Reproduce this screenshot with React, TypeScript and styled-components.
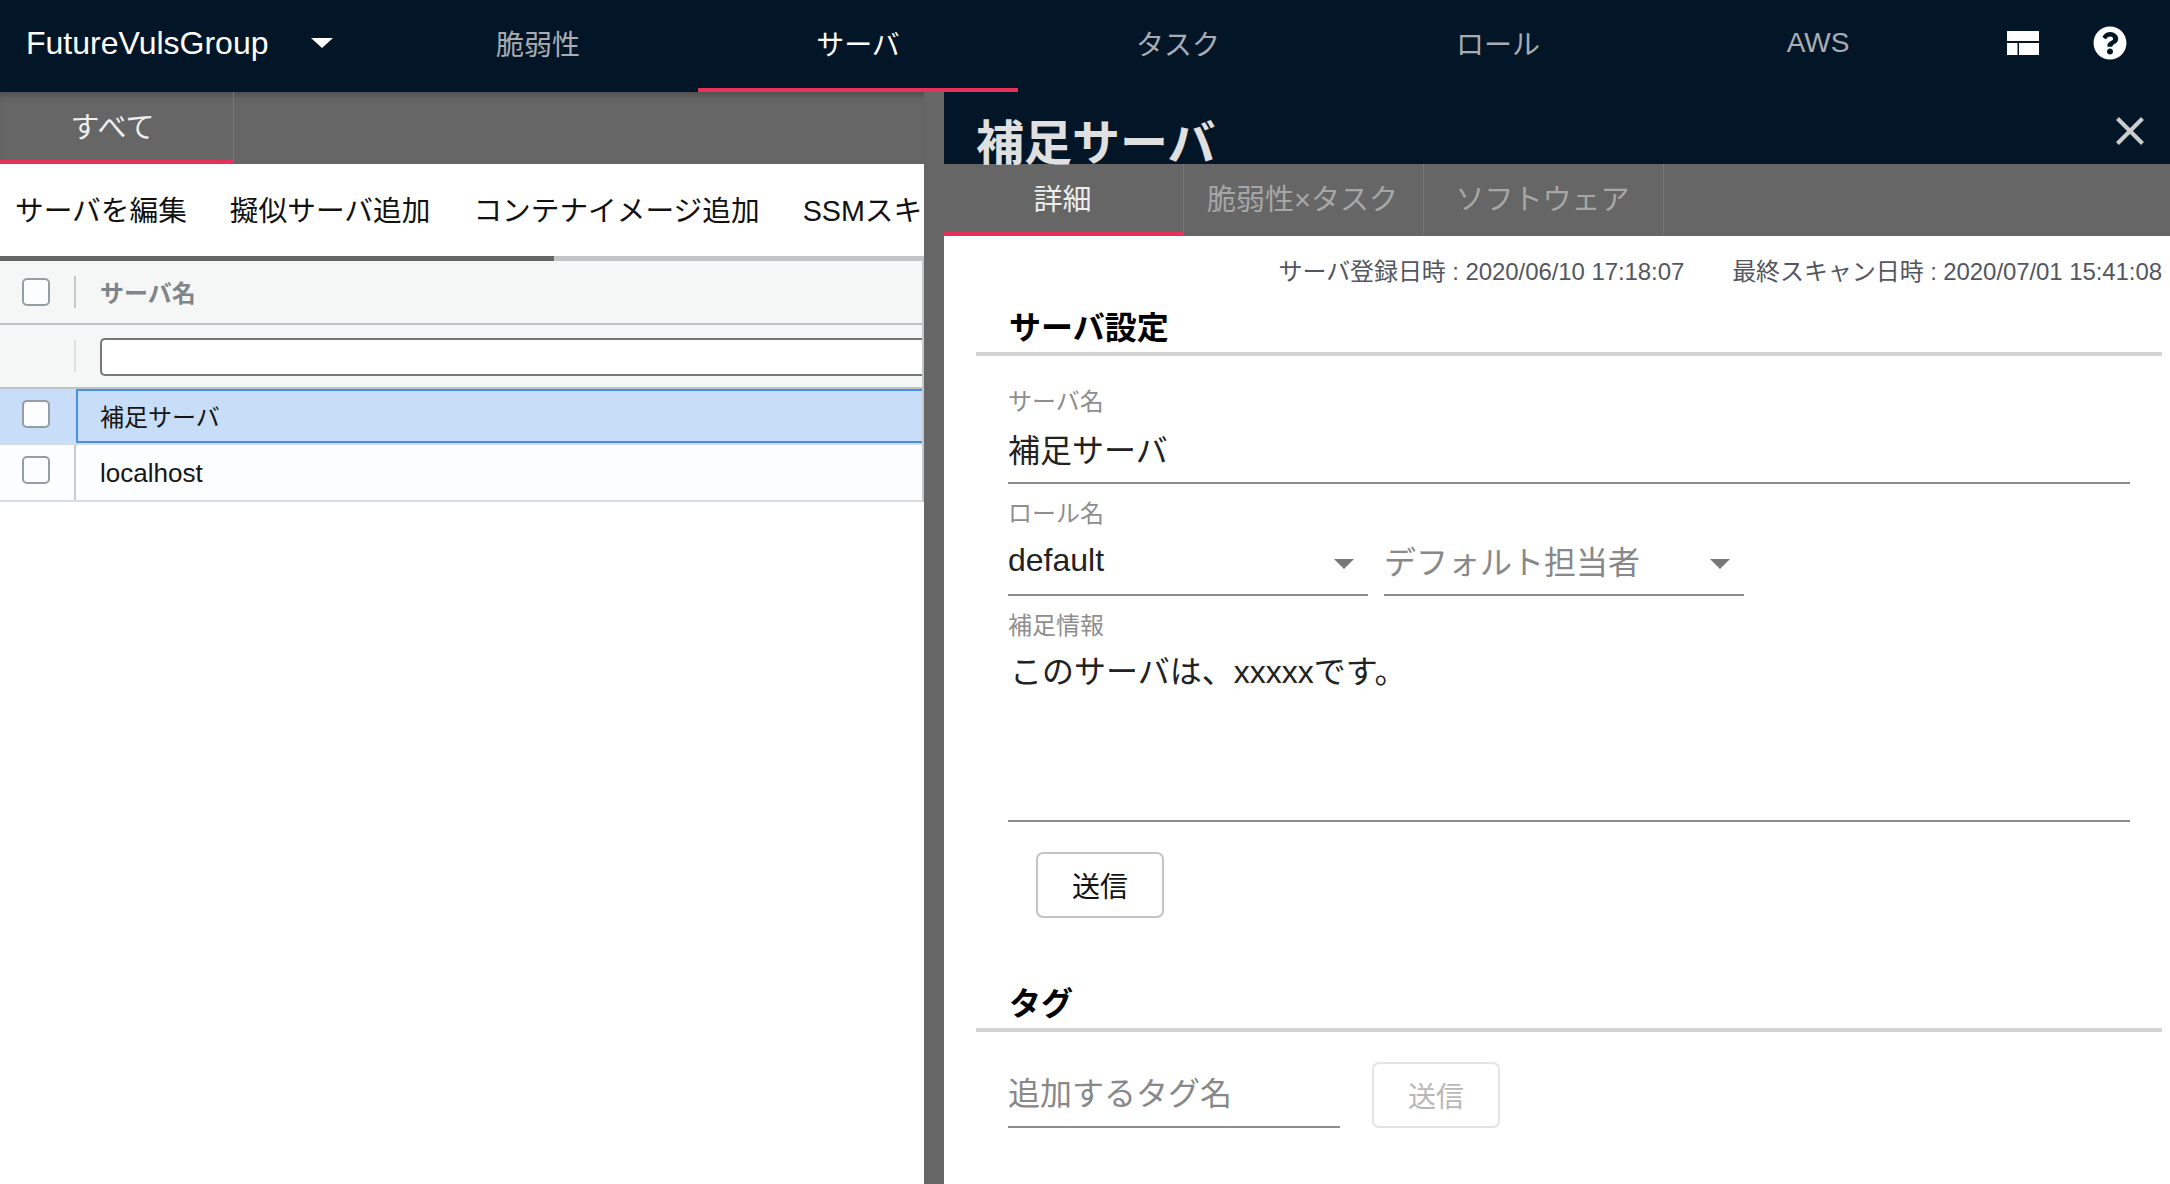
import { useState } from "react";
import styled, { createGlobalStyle } from "styled-components";
import { FaQuestionCircle } from "react-icons/fa";

const red = "#e6325b";
const navy = "#031627";

const GlobalStyle = createGlobalStyle`
  html, body {
    margin: 0;
    padding: 0;
    background: #666;
  }
  * {
    box-sizing: border-box;
  }
  body, input, textarea, button {
    font-family: "Liberation Sans", "Noto Sans CJK JP", sans-serif;
  }
`;

const Page = styled.div`
  width: 2170px;
  height: 1184px;
  overflow: hidden;
  display: flex;
  flex-direction: column;
  background: #666;
`;

const TopBar = styled.header`
  height: 92px;
  flex: none;
  display: flex;
  background: ${navy};
`;

const Logo = styled.div`
  width: 378px;
  padding-left: 26px;
  display: flex;
  align-items: center;
  color: #fff;
  font-size: 32px;
  padding-bottom: 6px;
`;

const LogoCaret = styled.span`
  margin-left: 43px;
  width: 0;
  height: 0;
  border-left: 11px solid transparent;
  border-right: 11px solid transparent;
  border-top: 10px solid #fff;
`;

const NavTab = styled.div<{ $active?: boolean }>`
  width: 320px;
  display: flex;
  align-items: center;
  justify-content: center;
  font-size: 28px;
  padding-bottom: 6px;
  padding-top: 4px;
  color: ${(p) => (p.$active ? "#fff" : "#a9adb2")};
  border-bottom: 4px solid ${(p) => (p.$active ? red : "transparent")};
`;

const TopIcons = styled.div`
  flex: 1;
  display: flex;
  align-items: center;
  padding: 0 0 6px 29px;
  gap: 54px;
  color: #fff;
`;

const Main = styled.div`
  flex: 1;
  display: flex;
  gap: 20px;
  min-height: 0;
`;

const LeftPanel = styled.section`
  width: 924px;
  display: flex;
  flex-direction: column;
`;

const TabBar = styled.div`
  height: 72px;
  flex: none;
  display: flex;
  background: #666;
`;

const LeftTabBar = styled(TabBar)`
  box-shadow: inset 0 8px 8px -6px rgba(0, 0, 0, 0.3);
`;

const SubTab = styled.div<{ $active?: boolean; $width: number; $shift: number }>`
  width: ${(p) => p.$width}px;
  display: flex;
  align-items: center;
  justify-content: center;
  font-size: 29px;
  padding-right: ${(p) => p.$shift}px;
  padding-bottom: 2px;
  color: ${(p) => (p.$active ? "#eee" : "#a6a6a6")};
  border-right: 1px solid #777;
  border-bottom: 4px solid ${(p) => (p.$active ? red : "transparent")};
`;

const Sheet = styled.div`
  flex: 1;
  background: #fff;
`;

const Toolbar = styled.div`
  height: 92px;
  display: flex;
  align-items: center;
  overflow: hidden;
  white-space: nowrap;
  padding-left: 15px;
  padding-bottom: 4px;
  gap: 43px;
  font-size: 28.7px;
  color: #111;
`;

const ScrollTrack = styled.div`
  height: 5px;
  background: #c2c4c6;
`;

const ScrollThumb = styled.div`
  width: 554px;
  height: 100%;
  background: #666;
`;

const Table = styled.div`
  border-right: 2px solid #c4c8ca;
`;

const Row = styled.div<{ $height: number; $bg: string; $line: string }>`
  height: ${(p) => p.$height}px;
  display: flex;
  background: ${(p) => p.$bg};
  border-bottom: 2px solid ${(p) => p.$line};
`;

const CheckCell = styled.div<{ $top?: boolean }>`
  width: 74px;
  flex: none;
  display: flex;
  align-items: ${(p) => (p.$top ? "flex-start" : "center")};
  padding: ${(p) => (p.$top ? "11px" : "0")} 0 0 22px;
`;

const CheckBox = styled.input.attrs({ type: "checkbox" })`
  appearance: none;
  width: 28px;
  height: 28px;
  margin: 0;
  border: 2px solid #959ea3;
  border-radius: 5px;
  background: #fcfdff;
`;

const Divider = styled.div<{ $full?: boolean; $color: string }>`
  width: 2px;
  flex: none;
  align-self: ${(p) => (p.$full ? "stretch" : "center")};
  height: ${(p) => (p.$full ? "auto" : "32px")};
  background: ${(p) => p.$color};
`;

const Cell = styled.div<{ $selected?: boolean }>`
  flex: 1;
  display: flex;
  align-items: center;
  font-size: 24px;
  color: #151515;
  border: ${(p) => (p.$selected ? "2px solid #4a90e2" : "none")};
  border-right: none;
  padding-left: ${(p) => (p.$selected ? "22px" : "24px")};
  padding-bottom: ${(p) => (p.$selected ? "2px" : "0")};
`;

const HeadCell = styled(Cell)`
  color: #7f8589;
  font-weight: 700;
  padding-bottom: 2px;
`;

const LatinCell = styled(Cell)`
  font-size: 26px;
  padding-top: 2px;
`;

const FilterInput = styled.input`
  width: 100%;
  height: 38px;
  margin-top: 2px;
  border: 2px solid #777;
  border-right: none;
  border-radius: 5px 0 0 5px;
  background: #fff;
  outline: none;
`;

const DetailPanel = styled.section`
  flex: 1;
  display: flex;
  flex-direction: column;
  min-width: 0;
`;

const DetailHead = styled.div`
  height: 72px;
  flex: none;
  position: relative;
  display: flex;
  justify-content: space-between;
  padding: 28px 26px 0 32px;
  background: ${navy};
  z-index: 1;
`;

const Title = styled.h1`
  margin: 0;
  height: 48px;
  font-size: 48px;
  line-height: 48px;
  font-weight: 700;
  color: #e0e0e0;
`;

const CloseIcon = styled.svg`
  width: 28px;
  height: 28px;
  margin-top: -3px;
`;

const DetailBody = styled.div`
  flex: 1;
  background: #fff;
  padding: 20px 8px 0 32px;
`;

const Meta = styled.div`
  display: flex;
  justify-content: flex-end;
  gap: 48px;
  font-size: 24px;
  line-height: 32px;
  letter-spacing: -0.08px;
  color: #54565f;
`;

const SectionTitle = styled.h2<{ $top: number }>`
  margin: ${(p) => p.$top}px 0 0;
  height: 52px;
  padding-left: 33px;
  font-size: 32px;
  line-height: 48px;
  font-weight: 700;
  color: #000;
  border-bottom: 4px solid #d3d3d3;
`;

const Form = styled.div`
  padding: 32px 32px 0 32px;
`;

const FieldLabel = styled.div`
  height: 28px;
  font-size: 24px;
  line-height: 28px;
  color: #8e8e8e;
`;

const NameInput = styled.input`
  display: block;
  width: 100%;
  height: 68px;
  margin-bottom: 16px;
  padding: 0 0 2px;
  border: none;
  border-bottom: 2px solid #8c8c8c;
  outline: none;
  font-size: 32px;
  color: #222;
`;

const SelectRow = styled.div`
  display: flex;
  gap: 16px;
  margin-bottom: 16px;
`;

const Select = styled.div<{ $placeholder?: boolean }>`
  width: 360px;
  height: 68px;
  display: flex;
  align-items: center;
  justify-content: space-between;
  padding: 0 14px 2px 0;
  border-bottom: 2px solid #8c8c8c;
  font-size: 32px;
  color: ${(p) => (p.$placeholder ? "#888" : "#222")};
`;

const SelectCaret = styled.span`
  margin-top: 8px;
  width: 0;
  height: 0;
  border-left: 10px solid transparent;
  border-right: 10px solid transparent;
  border-top: 10px solid #777;
`;

const NoteInput = styled.textarea`
  display: block;
  width: 100%;
  height: 182px;
  padding: 16px 0 0 2px;
  border: none;
  border-bottom: 2px solid #8c8c8c;
  outline: none;
  resize: none;
  font-size: 32px;
  line-height: 32px;
  color: #222;
`;

const Button = styled.button`
  display: block;
  width: 128px;
  height: 66px;
  flex: none;
  padding: 0;
  background: #fff;
  border: 2px solid ${(p) => (p.disabled ? "#e4e4e4" : "#c4c4c4")};
  border-radius: 7px;
  font-size: 28px;
  color: ${(p) => (p.disabled ? "#b8b8b8" : "#111")};
`;

const SendButton = styled(Button)`
  margin: 30px 0 0 28px;
`;

const TagForm = styled.div`
  display: flex;
  gap: 32px;
  padding: 30px 0 0 32px;
`;

const TagInput = styled.input`
  width: 332px;
  height: 66px;
  padding: 0;
  border: none;
  border-bottom: 2px solid #8c8c8c;
  outline: none;
  font-size: 32px;
  &::placeholder {
    color: #888;
  }
`;

const navItems = ["脆弱性", "サーバ", "タスク", "ロール", "AWS"];
const actions = ["サーバを編集", "擬似サーバ追加", "コンテナイメージ追加", "SSMスキャン追加"];
const detailTabs = ["詳細", "脆弱性×タスク", "ソフトウェア"];

export default function App() {
  const [active] = useState("サーバ");

  return (
    <Page>
      <GlobalStyle />
      <TopBar>
        <Logo>
          FutureVulsGroup
          <LogoCaret />
        </Logo>
        {navItems.map((item) => (
          <NavTab key={item} $active={item === active}>
            {item}
          </NavTab>
        ))}
        <TopIcons>
          <svg width="32" height="24" viewBox="0 0 32 24" fill="#fff">
            <rect x="0" y="0" width="32" height="10" />
            <rect x="0" y="12" width="10.5" height="12" />
            <rect x="12" y="12" width="20" height="12" />
          </svg>
          <FaQuestionCircle size={34} />
        </TopIcons>
      </TopBar>

      <Main>
        <LeftPanel>
          <LeftTabBar>
            <SubTab $active $width={234} $shift={8}>
              すべて
            </SubTab>
          </LeftTabBar>
          <Sheet>
            <Toolbar>
              {actions.map((a) => (
                <span key={a}>{a}</span>
              ))}
            </Toolbar>
            <ScrollTrack>
              <ScrollThumb />
            </ScrollTrack>
            <Table>
              <Row $height={64} $bg="#f5f7f7" $line="#bdc3c7">
                <CheckCell>
                  <CheckBox />
                </CheckCell>
                <Divider $color="#c4c8ca" />
                <HeadCell>サーバ名</HeadCell>
              </Row>
              <Row $height={64} $bg="#f5f7f7" $line="#bdc3c7">
                <CheckCell />
                <Divider $color="#dfe2e3" />
                <Cell>
                  <FilterInput />
                </Cell>
              </Row>
              <Row $height={56} $bg="#c7ddf8" $line="#d5dde3">
                <CheckCell $top>
                  <CheckBox />
                </CheckCell>
                <Divider $full $color="#c7ddf8" />
                <Cell $selected>補足サーバ</Cell>
              </Row>
              <Row $height={57} $bg="#fcfdff" $line="#dadcde">
                <CheckCell $top>
                  <CheckBox />
                </CheckCell>
                <Divider $full $color="#c9cdd0" />
                <LatinCell>localhost</LatinCell>
              </Row>
            </Table>
          </Sheet>
        </LeftPanel>

        <DetailPanel>
          <DetailHead>
            <Title>補足サーバ</Title>
            <CloseIcon viewBox="0 0 28 28" stroke="#ccc" strokeWidth="4">
              <line x1="1.5" y1="1.5" x2="26.5" y2="26.5" />
              <line x1="26.5" y1="1.5" x2="1.5" y2="26.5" />
            </CloseIcon>
          </DetailHead>
          <TabBar>
            {detailTabs.map((t, i) => (
              <SubTab key={t} $active={i === 0} $width={240} $shift={2}>
                {t}
              </SubTab>
            ))}
          </TabBar>
          <DetailBody>
            <Meta>
              <span>サーバ登録日時 : 2020/06/10 17:18:07</span>
              <span>最終スキャン日時 : 2020/07/01 15:41:08</span>
            </Meta>
            <SectionTitle $top={16}>サーバ設定</SectionTitle>
            <Form>
              <FieldLabel>サーバ名</FieldLabel>
              <NameInput defaultValue="補足サーバ" />
              <FieldLabel>ロール名</FieldLabel>
              <SelectRow>
                <Select>
                  default
                  <SelectCaret />
                </Select>
                <Select $placeholder>
                  デフォルト担当者
                  <SelectCaret />
                </Select>
              </SelectRow>
              <FieldLabel>補足情報</FieldLabel>
              <NoteInput defaultValue="このサーバは、xxxxxです。" />
              <SendButton>送信</SendButton>
            </Form>
            <SectionTitle $top={62}>タグ</SectionTitle>
            <TagForm>
              <TagInput placeholder="追加するタグ名" />
              <Button disabled>送信</Button>
            </TagForm>
          </DetailBody>
        </DetailPanel>
      </Main>
    </Page>
  );
}
